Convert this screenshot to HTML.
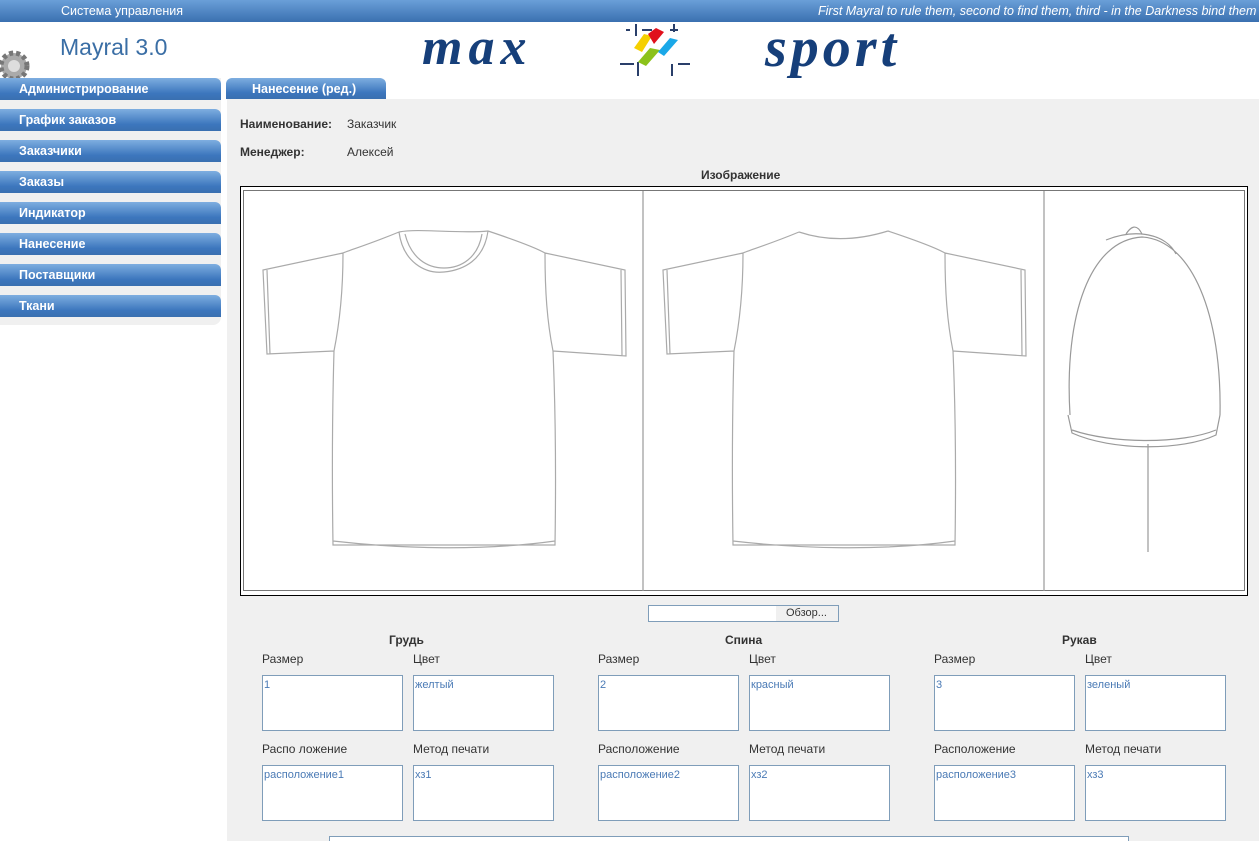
<!DOCTYPE html>
<html><head><meta charset="utf-8"><style>
*{margin:0;padding:0;box-sizing:border-box}
body{width:1259px;height:841px;overflow:hidden;background:#fff;font-family:"Liberation Sans",sans-serif;font-size:12px;color:#333;position:relative}
.abs{position:absolute}
.top{left:0;top:0;width:1259px;height:22px;background:linear-gradient(#6a9fd8,#3a70b0);color:#fff;overflow:hidden}
.grad{background:linear-gradient(#7eaee0,#3c76bd 70%,#3a70b0)}
.menu{left:0;top:78px;width:221px;height:247px;background:#f0f0f0;border-radius:0 0 8px 0}
.mi{position:absolute;left:0;width:221px;height:22px;color:#fff;font-weight:bold;font-size:12.5px;padding:4px 0 0 19px;border-radius:0 6px 0 0}
.main{left:227px;top:99px;width:1032px;height:742px;background:#f0f0f0}
.lbl{font-size:12px;color:#333}
.box{position:absolute;width:141px;height:56px;background:#fff;border:1px solid #7f9db9;color:#4a7ab5;font-size:11px;padding:3px 1px}
.h{position:absolute;font-weight:bold;font-size:12px;color:#333}
</style></head><body>
<div class="abs top"><span class="abs" style="left:61px;top:4px;font-size:12.5px">Система управления</span><span class="abs" style="left:818px;top:4px;font-style:italic;font-size:12.5px;white-space:nowrap">First Mayral to rule them, second to find them, third - in the Darkness bind them</span></div>
<svg class="abs" style="left:0;top:42px" width="34" height="38" viewBox="0 0 34 38"><circle cx="14" cy="24" r="13" fill="#aaa" stroke="#777" stroke-dasharray="4 3" stroke-width="5"/><circle cx="14" cy="24" r="6" fill="#ddd"/></svg>
<div class="abs" style="left:60px;top:34px;font-family:'Liberation Sans',sans-serif;font-size:23px;color:#3a6ea5">Mayral 3.0</div>
<div class="abs" style="left:422px;top:18px;font-family:'Liberation Serif',serif;font-style:italic;font-weight:bold;font-size:52px;color:#163f7a;letter-spacing:6px">max</div>
<div class="abs" style="left:765px;top:16px;font-family:'Liberation Serif',serif;font-style:italic;font-weight:bold;font-size:56px;color:#163f7a;letter-spacing:4px">sport</div>
<svg class="abs" style="left:618px;top:24px" width="72" height="52" viewBox="0 0 72 52"><g stroke="#2a3f6a" stroke-width="2"><path d="M2 40h14M60 40h12M20 38v14M54 40v12M8 6h4M18 0v12M24 6h10M52 6h8M56 0v8"/></g><path d="M16 24l10-14 8 2-10 16z" fill="#f5d000"/><path d="M30 10l8-6 8 4-10 12z" fill="#e0101c"/><path d="M20 38l12-14 10 2-14 16z" fill="#8cc21a"/><path d="M40 28l12-14 8 2-14 16z" fill="#1aa8e8"/></svg>
<div class="abs menu">
<div class="mi grad" style="top:0">Администрирование</div>
<div class="mi grad" style="top:31px">График заказов</div>
<div class="mi grad" style="top:62px">Заказчики</div>
<div class="mi grad" style="top:93px">Заказы</div>
<div class="mi grad" style="top:124px">Индикатор</div>
<div class="mi grad" style="top:155px">Нанесение</div>
<div class="mi grad" style="top:186px">Поставщики</div>
<div class="mi grad" style="top:217px">Ткани</div>
</div>
<div class="abs grad" style="left:226px;top:78px;width:160px;height:21px;border-radius:6px 6px 0 0;color:#fff;font-weight:bold;font-size:12.5px;padding:4px 0 0 26px">Нанесение (ред.)</div>
<div class="abs main"></div>
<div class="h" style="left:240px;top:117px">Наименование:</div><div class="abs lbl" style="left:347px;top:117px">Заказчик</div>
<div class="h" style="left:240px;top:145px">Менеджер:</div><div class="abs lbl" style="left:347px;top:145px">Алексей</div>
<div class="h" style="left:701px;top:168px">Изображение</div>
<div class="abs" style="left:240px;top:186px;width:1008px;height:410px;border:1px solid #000;background:#fff"><div class="abs" style="left:2px;top:3px;width:1002px;height:401px;border:1px solid #777"></div></div>
<svg class="abs" style="left:240px;top:186px" width="1008" height="410" viewBox="0 0 1008 410" fill="none" stroke="#aaa" stroke-width="1.2">
<path d="M403 5v400M804 5v400" stroke="#999"/>
<path d="M159 46C130 58 110 64 103 67L23 84l4 84 67-3M27 84l3 84M94 165c6-30 9-60 9-98M94 165c-2 70-2 130-1 194h222c1-64 1-124-2-194-6-30-8-60-8-98M313 165l73 5 -1-86-80-17M381 84l1 86M248 45c30 10 50 18 57 22M159 46c20-4 60 2 89-1M159 46c4 30 26 42 45 40 20-2 40-12 44-41M165 48c6 24 22 34 39 34 17 0 34-10 38-34M93 355c70 8 150 10 222 0"/>
<g transform="translate(400,0)"><path d="M159 46C130 58 110 64 103 67L23 84l4 84 67-3M27 84l3 84M94 165c6-30 9-60 9-98M94 165c-2 70-2 130-1 194h222c1-64 1-124-2-194-6-30-8-60-8-98M313 165l73 5 -1-86-80-17M381 84l1 86M248 45c30 10 50 18 57 22M159 46c30 10 60 8 89-1M93 355c70 8 150 10 222 0"/></g>
<path d="M830 229c-6-100 20-175 72-178 50 3 80 78 78 178M828 229l4 18c40 18 110 18 144 2l4-20M832 244c40 14 110 14 144 0M908 258v108M866 54c30-12 60-6 70 14M886 48c4-6 10-12 16 0" stroke="#999"/>
</svg>
<div class="abs" style="left:648px;top:605px;width:191px;height:17px;border:1px solid #7f9db9;background:#fff"><div class="abs" style="left:127px;top:0;width:62px;height:15px;background:#f0f0f0;font-size:11px;padding:1px 0 0 10px">Обзор...</div></div>
<div class="h" style="left:389px;top:633px">Грудь</div>
<div class="h" style="left:725px;top:633px">Спина</div>
<div class="h" style="left:1062px;top:633px">Рукав</div>
<div class="abs lbl" style="left:262px;top:652px">Размер</div><div class="abs lbl" style="left:413px;top:652px">Цвет</div>
<div class="abs lbl" style="left:598px;top:652px">Размер</div><div class="abs lbl" style="left:749px;top:652px">Цвет</div>
<div class="abs lbl" style="left:934px;top:652px">Размер</div><div class="abs lbl" style="left:1085px;top:652px">Цвет</div>
<div class="box" style="left:262px;top:675px">1</div><div class="box" style="left:413px;top:675px">желтый</div>
<div class="box" style="left:598px;top:675px">2</div><div class="box" style="left:749px;top:675px">красный</div>
<div class="box" style="left:934px;top:675px">3</div><div class="box" style="left:1085px;top:675px">зеленый</div>
<div class="abs lbl" style="left:262px;top:742px">Распо ложение</div><div class="abs lbl" style="left:413px;top:742px">Метод печати</div>
<div class="abs lbl" style="left:598px;top:742px">Расположение</div><div class="abs lbl" style="left:749px;top:742px">Метод печати</div>
<div class="abs lbl" style="left:934px;top:742px">Расположение</div><div class="abs lbl" style="left:1085px;top:742px">Метод печати</div>
<div class="box" style="left:262px;top:765px">расположение1</div><div class="box" style="left:413px;top:765px">хз1</div>
<div class="box" style="left:598px;top:765px">расположение2</div><div class="box" style="left:749px;top:765px">хз2</div>
<div class="box" style="left:934px;top:765px">расположение3</div><div class="box" style="left:1085px;top:765px">хз3</div>
<div class="abs" style="left:329px;top:836px;width:800px;height:5px;border:1px solid #7f9db9;border-bottom:none;background:#fff"></div>
</body></html>
